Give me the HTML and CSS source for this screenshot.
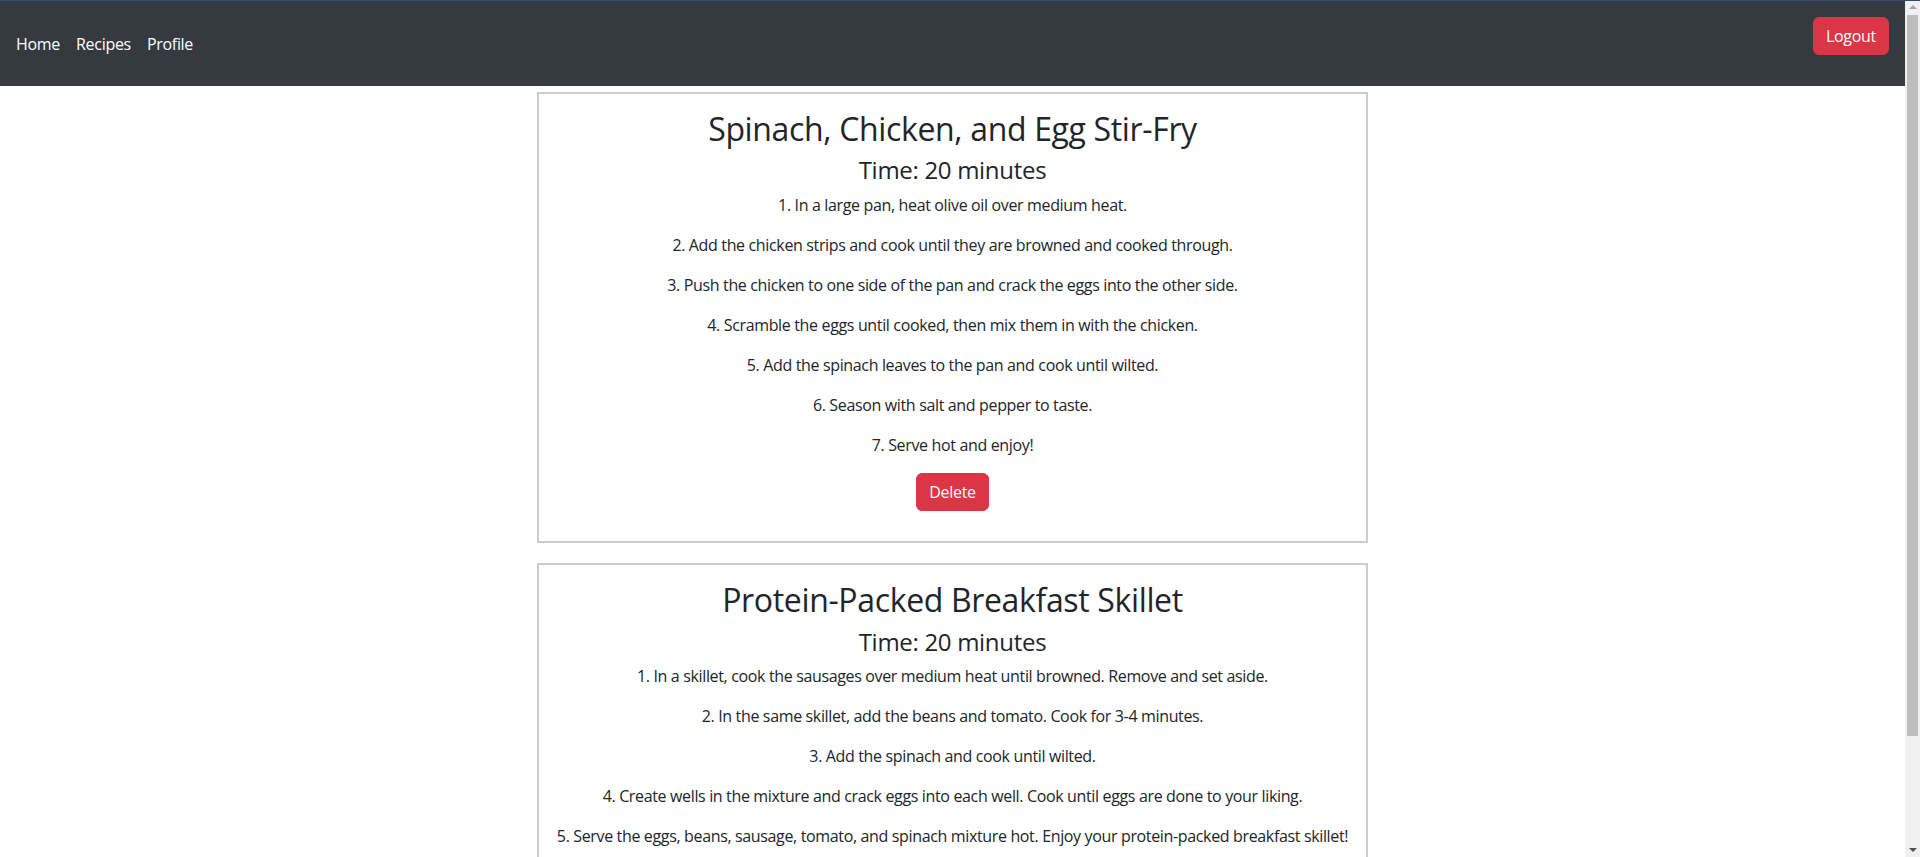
FILE: index.html
```html
<!DOCTYPE html>
<html lang="en">
<head>
<meta charset="utf-8">
<title>Recipes</title>
<link rel="stylesheet" href="styles.css">
</head>
<body>
<div class="page">
  <nav class="navbar">
    <ul class="nav-links">
      <li><a class="nav-link" href="#">Home</a></li>
      <li><a class="nav-link" href="#">Recipes</a></li>
      <li><a class="nav-link" href="#">Profile</a></li>
    </ul>
    <button class="btn btn-danger logout" type="button">Logout</button>
  </nav>

  <main class="recipes">
    <section class="card">
      <h2 class="recipe-title">Spinach, Chicken, and Egg Stir-Fry</h2>
      <h4 class="recipe-time">Time: 20 minutes</h4>
      <p>1. In a large pan, heat olive oil over medium heat.</p>
      <p>2. Add the chicken strips and cook until they are browned and cooked through.</p>
      <p>3. Push the chicken to one side of the pan and crack the eggs into the other side.</p>
      <p>4. Scramble the eggs until cooked, then mix them in with the chicken.</p>
      <p>5. Add the spinach leaves to the pan and cook until wilted.</p>
      <p>6. Season with salt and pepper to taste.</p>
      <p>7. Serve hot and enjoy!</p>
      <button class="btn btn-danger delete" type="button">Delete</button>
    </section>

    <section class="card">
      <h2 class="recipe-title">Protein-Packed Breakfast Skillet</h2>
      <h4 class="recipe-time">Time: 20 minutes</h4>
      <p>1. In a skillet, cook the sausages over medium heat until browned. Remove and set aside.</p>
      <p>2. In the same skillet, add the beans and tomato. Cook for 3-4 minutes.</p>
      <p>3. Add the spinach and cook until wilted.</p>
      <p>4. Create wells in the mixture and crack eggs into each well. Cook until eggs are done to your liking.</p>
      <p>5. Serve the eggs, beans, sausage, tomato, and spinach mixture hot. Enjoy your protein-packed breakfast skillet!</p>
      <button class="btn btn-danger delete" type="button">Delete</button>
    </section>
  </main>
</div>

<div class="fake-scrollbar" aria-hidden="true">
  <span class="arrow arrow-up"></span>
  <span class="thumb"></span>
  <span class="arrow arrow-down"></span>
</div>
</body>
</html>
```
FILE: styles.css
```css
html, body {
  margin: 0;
  padding: 0;
}

body {
  font-family: "Open Sans", "Noto Sans", sans-serif;
  font-size: 16px;
  line-height: 1.5;
  color: #212529;
  background: #fff;
  letter-spacing: -0.3px;
  border-top: 1px solid #2f4c70;
}

.page {
  margin-right: 15px;
}

/* Navbar */
.navbar {
  height: 85px;
  background: #343a40;
  display: flex;
  align-items: center;
  justify-content: space-between;
  padding: 0 16px 0 8px;
}

.nav-links {
  list-style: none;
  margin: 1px 0 0;
  padding: 0;
  display: flex;
}

.nav-link {
  display: block;
  padding: 8px 8px;
  color: #fff;
  text-decoration: none;
  font-size: 16px;
  line-height: 24px;
}

.btn {
  font-family: inherit;
  font-size: 16px;
  line-height: 24px;
  letter-spacing: -0.3px;
  padding: 6px 12px;
  border-radius: 6px;
  border: 1px solid transparent;
  cursor: pointer;
}

.btn-danger {
  background: #dc3545;
  border-color: #dc3545;
  color: #fff;
}

.logout {
  align-self: flex-start;
  margin-top: 16px;
}

/* Recipes */
.recipes {
  padding-top: 6px;
}

.card {
  box-sizing: border-box;
  width: 831px;
  margin: 0 auto 20px;
  border: 2px solid #cccccc;
  padding: 16px 12px 14px;
  text-align: center;
}

.recipe-title {
  margin: 0 0 8px;
  font-size: 32px;
  font-weight: 400;
  line-height: 1.2;
  letter-spacing: -0.35px;
}

.recipe-time {
  margin: 0 0 8px;
  font-size: 24px;
  font-weight: 400;
  line-height: 1.2;
  letter-spacing: -0.3px;
}

.card p {
  margin: 0 0 16px;
  letter-spacing: -0.35px;
}

.delete {
  margin-bottom: 16px;
}

/* Fake scrollbar drawn over the right edge (the reference shows one) */
.fake-scrollbar {
  position: fixed;
  top: 1px;
  right: 0;
  bottom: 0;
  width: 15px;
  background: #f0f0f0;
}

.fake-scrollbar .thumb {
  position: absolute;
  left: 2px;
  right: 2px;
  top: 14px;
  height: 721px;
  background: #bdbdbd;
}

.fake-scrollbar .arrow {
  position: absolute;
  left: 4px;
  width: 0;
  height: 0;
  border-left: 4px solid transparent;
  border-right: 4px solid transparent;
}

.fake-scrollbar .arrow-up {
  top: 4px;
  border-bottom: 4px solid #a3a3a3;
}

.fake-scrollbar .arrow-down {
  bottom: 5px;
  border-top: 4px solid #505050;
}
```
